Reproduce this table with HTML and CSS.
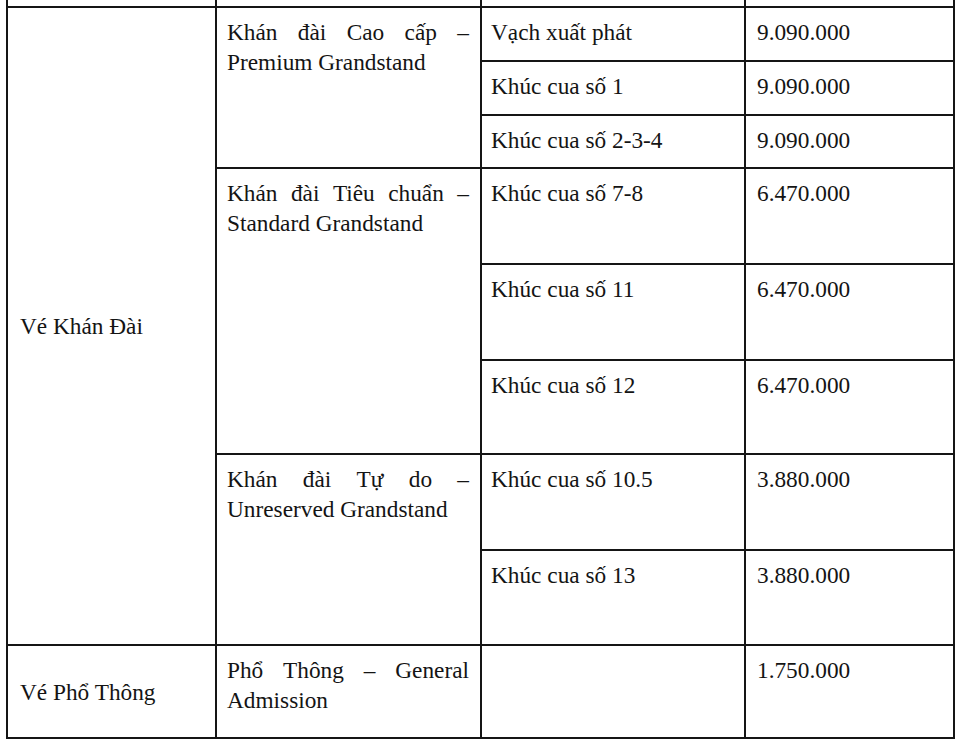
FILE: index.html
```html
<!DOCTYPE html>
<html lang="vi">
<head>
<meta charset="utf-8">
<title>Giá vé</title>
<link rel="stylesheet" href="styles.css">
</head>
<body>
<table class="tickets">
  <colgroup><col class="c1"><col class="c2"><col class="c3"><col class="c4"></colgroup>
  <tr class="cut"><td></td><td></td><td></td><td></td></tr>
  <tr class="rs">
    <td rowspan="8" class="cat">Vé Khán Đài</td>
    <td rowspan="3" class="zone">
      <div class="jl"><span>Khán</span><span>đài</span><span>Cao</span><span>cấp</span><span>–</span></div>
      <div>Premium Grandstand</div>
    </td>
    <td class="seat">Vạch xuất phát</td><td>9.090.000</td>
  </tr>
  <tr class="rs"><td class="seat">Khúc cua số 1</td><td>9.090.000</td></tr>
  <tr class="rs3"><td class="seat">Khúc cua số 2-3-4</td><td>9.090.000</td></tr>
  <tr class="rl">
    <td rowspan="3" class="zone">
      <div class="jl"><span>Khán</span><span>đài</span><span>Tiêu</span><span>chuẩn</span><span>–</span></div>
      <div>Standard Grandstand</div>
    </td>
    <td class="seat">Khúc cua số 7-8</td><td>6.470.000</td>
  </tr>
  <tr class="rl"><td class="seat">Khúc cua số 11</td><td>6.470.000</td></tr>
  <tr class="rl2"><td class="seat">Khúc cua số 12</td><td>6.470.000</td></tr>
  <tr class="rl">
    <td rowspan="2" class="zone">
      <div class="jl"><span>Khán</span><span>đài</span><span>Tự</span><span>do</span><span>–</span></div>
      <div>Unreserved Grandstand</div>
    </td>
    <td class="seat">Khúc cua số 10.5</td><td>3.880.000</td>
  </tr>
  <tr class="rl3"><td class="seat">Khúc cua số 13</td><td>3.880.000</td></tr>
  <tr class="rl4">
    <td class="cat">Vé Phổ Thông</td>
    <td class="zone">
      <div class="jl"><span>Phổ</span><span>Thông</span><span>–</span><span>General</span></div>
      <div>Admission</div>
    </td>
    <td class="seat"></td><td>1.750.000</td>
  </tr>
</table>
</body>
</html>
```
FILE: styles.css
```css
html, body {
  margin: 0;
  padding: 0;
  background: #fff;
}
body {
  overflow: hidden;
  height: 745px;
}
.tickets {
  border-collapse: collapse;
  table-layout: fixed;
  width: 949px;
  margin: -34px 0 0 6px;
  font-family: "Liberation Serif", "Times New Roman", serif;
  font-size: 23.3px;
  line-height: 30px;
  color: #141414;
}
.c1 { width: 209px; }
.c2 { width: 265px; }
.c3 { width: 264px; }
.c4 { width: 209px; }
.tickets td {
  border: 2px solid #151515;
  vertical-align: top;
  padding: 9px 10px 0 11px;
  white-space: nowrap;
}
.tickets td.cat {
  vertical-align: middle;
  padding: 0 0 0 12px;
}
.tickets td.zone {
  padding-left: 10px;
  padding-right: 11px;
}
.tickets td.seat {
  padding-left: 9px;
}
.jl {
  display: flex;
  justify-content: space-between;
}
.cut { height: 40px; }
.rs { height: 54px; }
.rs3 { height: 53px; }
.rl { height: 96px; }
.rl2 { height: 94px; }
.rl3 { height: 95px; }
.rl4 { height: 93px; }
```
